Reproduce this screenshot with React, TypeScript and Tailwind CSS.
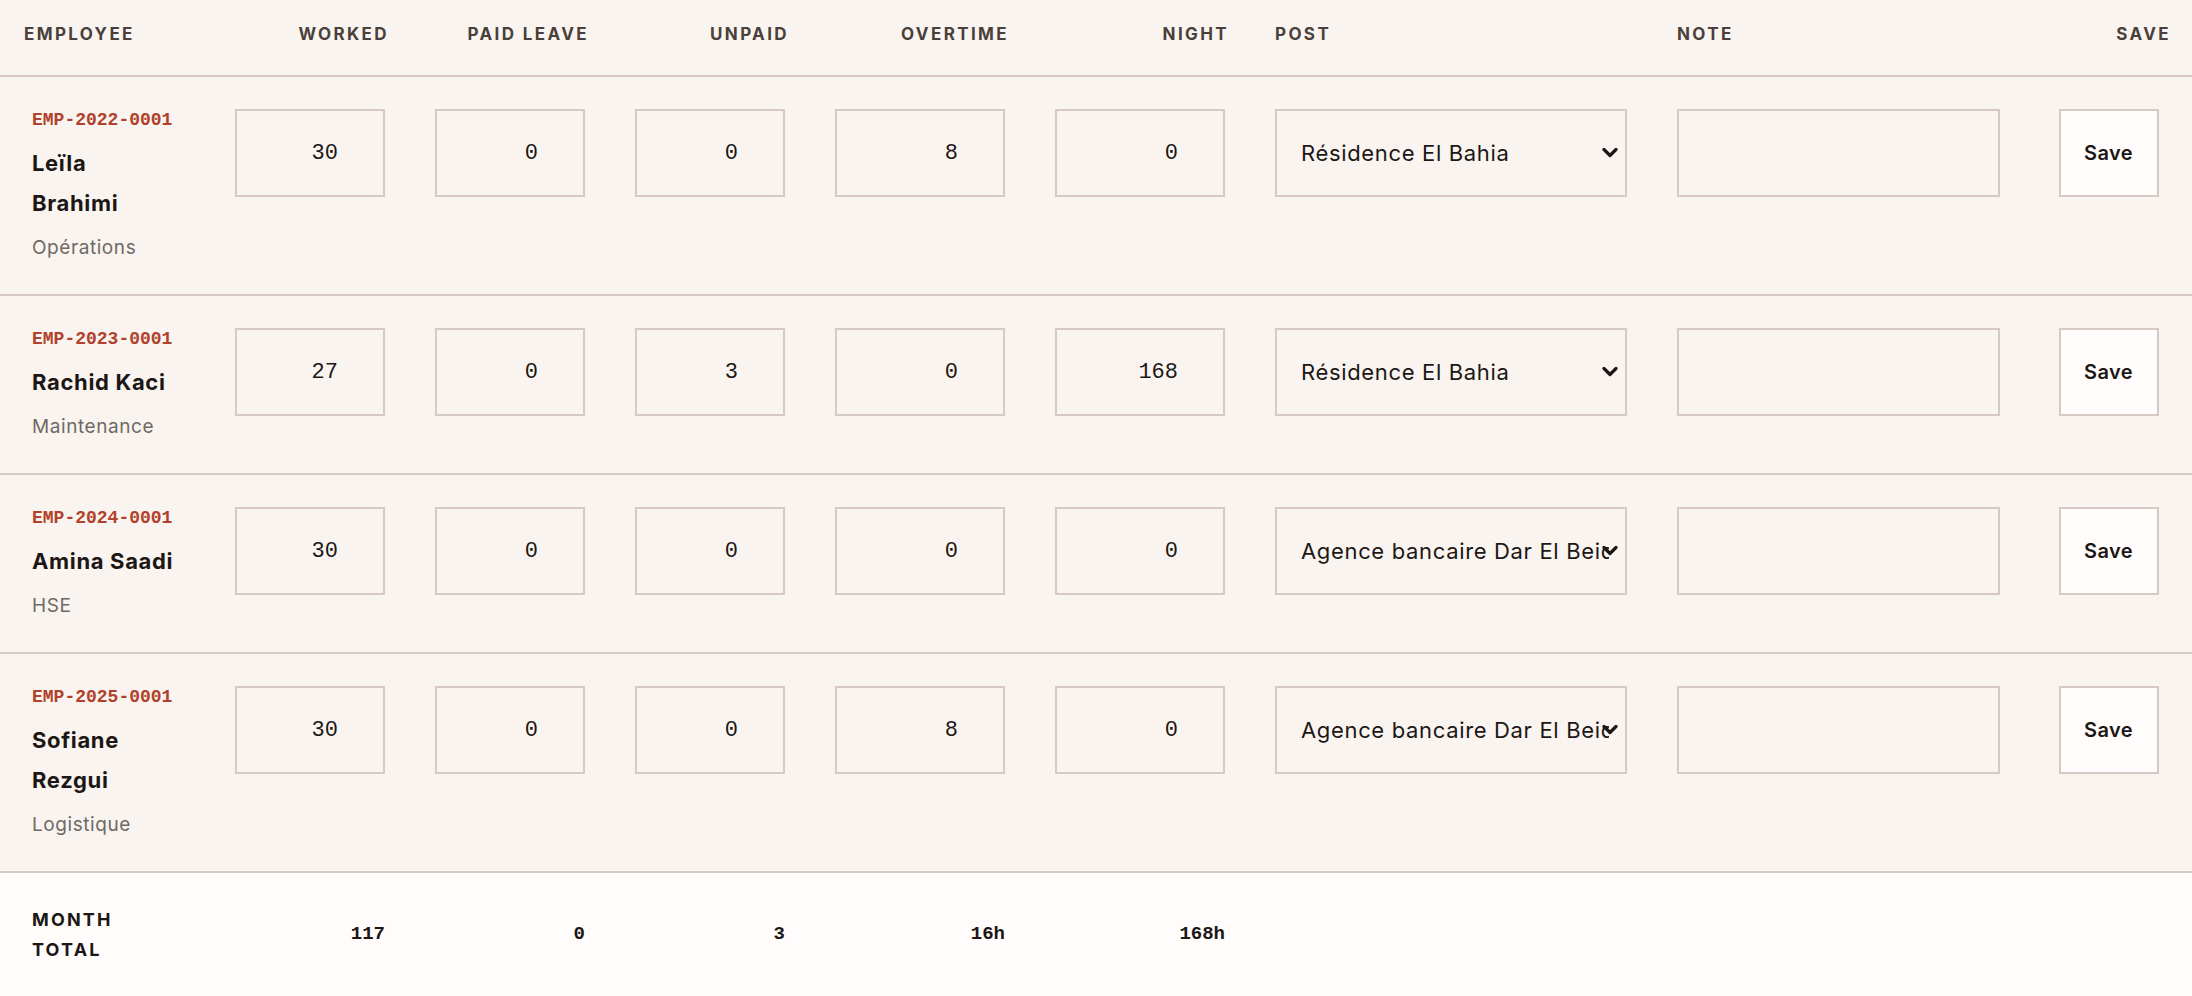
import React from 'react';

type Row = {
  id: string;
  name: string;
  dept: string;
  worked: number;
  paid: number;
  unpaid: number;
  overtime: number;
  night: number;
  post: string;
};

const posts = ['Résidence El Bahia', 'Agence bancaire Dar El Beida', 'Siège social Hydra'];

const rows: Row[] = [
  { id: 'EMP-2022-0001', name: 'Leïla Brahimi', dept: 'Opérations', worked: 30, paid: 0, unpaid: 0, overtime: 8, night: 0, post: posts[0] },
  { id: 'EMP-2023-0001', name: 'Rachid Kaci', dept: 'Maintenance', worked: 27, paid: 0, unpaid: 3, overtime: 0, night: 168, post: posts[0] },
  { id: 'EMP-2024-0001', name: 'Amina Saadi', dept: 'HSE', worked: 30, paid: 0, unpaid: 0, overtime: 0, night: 0, post: posts[1] },
  { id: 'EMP-2025-0001', name: 'Sofiane Rezgui', dept: 'Logistique', worked: 30, paid: 0, unpaid: 0, overtime: 8, night: 0, post: posts[1] },
];

const grid = 'grid grid-cols-[210px_200px_200px_200px_220px_220px_402px_373px_1fr]';
const cell = 'px-[25px]';
const headRight = 'pl-[25px] pr-[21px] text-right';
const mono = 'font-["Liberation_Mono",monospace]';
const head = 'text-[17px] font-bold tracking-[0.14em] uppercase text-[#4a3f3a]';

const NumField = ({ value }: { value: number }) => (
  <input
    type="text"
    inputMode="numeric"
    defaultValue={value}
    className={`${mono} w-full h-[88px] border-2 border-[#d6c9c4] bg-transparent text-right pr-[45px] text-[22px] text-[#1c1715] outline-none`}
  />
);

const App: React.FC = () => {
  const sum = (k: keyof Row) => rows.reduce((a, r) => a + (r[k] as number), 0);

  return (
    <div className='min-h-screen flex flex-col bg-[#f9f4ef] font-["Inter",sans-serif] text-[#1c1715]'>
      {/* Header */}
      <div className={`${grid} h-[77px] items-center pb-[5px] border-b-2 border-[#d6c9c4] ${head}`}>
        <div className="pl-6">Employee</div>
        <div className={headRight}>Worked</div>
        <div className={headRight}>Paid leave</div>
        <div className={headRight}>Unpaid</div>
        <div className={headRight}>Overtime</div>
        <div className={headRight}>Night</div>
        <div className={cell}>Post</div>
        <div className={cell}>Note</div>
        <div className={headRight}>Save</div>
      </div>

      {rows.map((r) => (
        <div key={r.id} className={`${grid} items-start py-8 border-b-2 border-[#d6c9c4]`}>
          <div className="pl-8 pr-[34px]">
            <div className={`${mono} text-[18px] leading-[22px] font-bold text-[#b1412a]`}>{r.id}</div>
            <div className="mt-3 text-[22px] leading-[40px] font-bold tracking-[0.03em]">{r.name}</div>
            <div className="mt-[11px] text-[19px] leading-[28px] tracking-[0.03em] text-[#6f6965]">{r.dept}</div>
          </div>
          <div className={cell}><NumField value={r.worked} /></div>
          <div className={cell}><NumField value={r.paid} /></div>
          <div className={cell}><NumField value={r.unpaid} /></div>
          <div className={cell}><NumField value={r.overtime} /></div>
          <div className={cell}><NumField value={r.night} /></div>
          <div className={cell}>
            <div className="relative">
              <select
                defaultValue={r.post}
                className="w-full h-[88px] appearance-none border-2 border-[#d6c9c4] bg-transparent pl-6 pr-4 text-[22px] tracking-[0.03em] text-[#1c1715] outline-none"
              >
                {posts.map((p) => (
                  <option key={p}>{p}</option>
                ))}
              </select>
              <svg
                className="absolute right-[9px] top-1/2 -translate-y-1/2 pointer-events-none"
                width="16"
                height="11"
                viewBox="0 0 16 11"
                fill="none"
              >
                <polyline points="2,2 8,8 14,2" stroke="#1c1715" strokeWidth="3.2" strokeLinecap="round" strokeLinejoin="round" />
              </svg>
            </div>
          </div>
          <div className={cell}>
            <input type="text" className="w-full h-[88px] border-2 border-[#d6c9c4] bg-transparent px-4 text-[22px] outline-none" />
          </div>
          <div className={`${cell} flex justify-center`}>
            <button className="w-[100px] h-[88px] border-2 border-[#d6c9c4] bg-[#fffcfb] text-[20px] font-semibold tracking-[0.02em] text-[#1c1715]">
              Save
            </button>
          </div>
        </div>
      ))}

      {/* Month total */}
      <div className={`${grid} flex-1 items-start pt-8 pb-6 bg-[#fffcfb]`}>
        <div className="pl-8 pr-[34px] text-[18px] leading-[30px] font-bold tracking-[0.12em] uppercase">Month total</div>
        <div className={`${cell} ${mono} mt-[15px] text-right text-[19px] font-bold`}>{sum('worked')}</div>
        <div className={`${cell} ${mono} mt-[15px] text-right text-[19px] font-bold`}>{sum('paid')}</div>
        <div className={`${cell} ${mono} mt-[15px] text-right text-[19px] font-bold`}>{sum('unpaid')}</div>
        <div className={`${cell} ${mono} mt-[15px] text-right text-[19px] font-bold`}>{sum('overtime')}h</div>
        <div className={`${cell} ${mono} mt-[15px] text-right text-[19px] font-bold`}>{sum('night')}h</div>
        <div />
        <div />
        <div />
      </div>
    </div>
  );
};

export default App;
